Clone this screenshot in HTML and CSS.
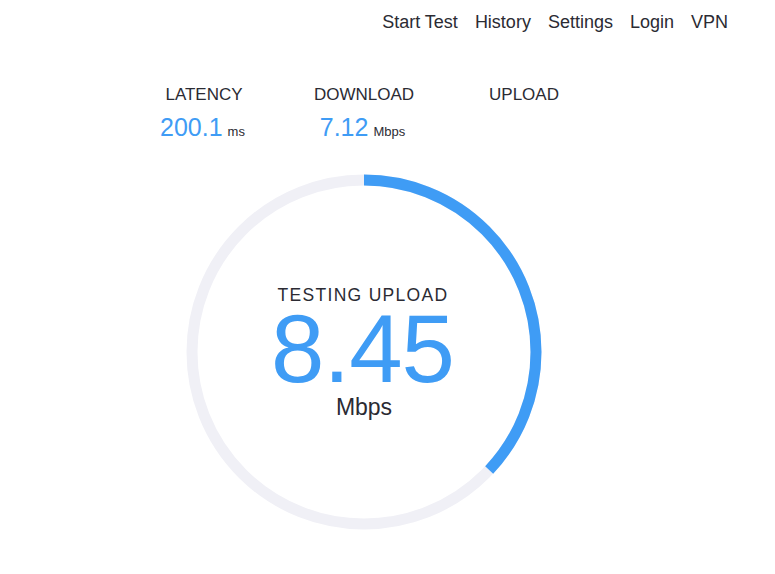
FILE: index.html
```html
<!DOCTYPE html>
<html>
<head>
<meta charset="utf-8">
<link rel="stylesheet" href="styles.css">
</head>
<body>
<div class="page">
  <nav class="nav">
    <a>Start Test</a>
    <a>History</a>
    <a>Settings</a>
    <a>Login</a>
    <a>VPN</a>
  </nav>
  <section class="stats">
    <div class="stat">
      <div class="label">LATENCY</div>
      <div class="value">200.1<span class="unit">ms</span></div>
    </div>
    <div class="stat">
      <div class="label">DOWNLOAD</div>
      <div class="value">7.12<span class="unit">Mbps</span></div>
    </div>
    <div class="stat">
      <div class="label">UPLOAD</div>
      <div class="value"></div>
    </div>
  </section>
  <section class="gauge">
    <svg class="ring" width="356" height="356" viewBox="0 0 356 356">
      <circle cx="178" cy="178" r="172" fill="none" stroke="#f0f0f6" stroke-width="11"/>
      <circle cx="178" cy="178" r="172" fill="none" stroke="#3f9cf5" stroke-width="11"
        stroke-dasharray="400 2000" transform="rotate(-90 178 178)"/>
    </svg>
    <div class="readout">
      <div class="phase">TESTING UPLOAD</div>
      <div class="speed">8.45</div>
      <div class="speed-unit">Mbps</div>
    </div>
  </section>
</div>
</body>
</html>
```
FILE: styles.css
```css
html, body {
  margin: 0;
  padding: 0;
  background: #fff;
}
body {
  font-family: "Liberation Sans", Arial, sans-serif;
  color: #2b2b33;
}
.page {
  width: 728px;
  display: flex;
  flex-direction: column;
  align-items: center;
}
.nav {
  align-self: stretch;
  display: flex;
  justify-content: flex-end;
  gap: 17px;
  padding-top: 12px;
  font-size: 18px;
  line-height: 20px;
}
.nav a {
  color: #2b2b33;
}
.stats {
  margin-top: 53px;
  display: flex;
  width: 480px;
}
.stat {
  width: 160px;
  display: flex;
  flex-direction: column;
  align-items: center;
}
.label {
  font-size: 17px;
  line-height: 20px;
}
.value {
  margin-top: 8px;
  font-size: 25px;
  line-height: 28px;
  height: 28px;
  color: #3f9cf5;
  margin-left: -3px;
}
.unit {
  font-size: 13px;
  color: #2b2b33;
  margin-left: 5px;
}
.gauge {
  margin-top: 33px;
  display: grid;
  width: 356px;
  height: 356px;
}
.ring, .readout {
  grid-area: 1 / 1;
}
.readout {
  padding-top: 111px;
  display: flex;
  flex-direction: column;
  align-items: center;
}
.phase {
  font-size: 17.5px;
  line-height: 20px;
  letter-spacing: 1.3px;
  margin-left: -2px;
}
.speed {
  margin-top: 4px;
  font-size: 96px;
  line-height: 80px;
  letter-spacing: -1px;
  margin-left: -3px;
  color: #3f9cf5;
}
.speed-unit {
  margin-top: 5px;
  font-size: 23px;
  line-height: 26px;
}
```
